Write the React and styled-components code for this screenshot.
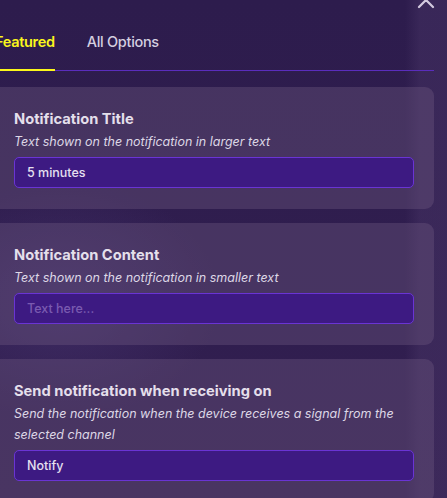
import React from "react";
import styled, { createGlobalStyle } from "styled-components";

const Global = createGlobalStyle`
  html, body { margin: 0; padding: 0; }
  body {
    width: 447px;
    height: 498px;
    overflow: hidden;
    font-family: Inter, "Noto Sans", sans-serif;
    background:
      linear-gradient(90deg, rgba(0,0,0,0) 0px, rgba(0,0,0,0) 405px, rgba(80,60,110,0.35) 420px, rgba(80,60,110,0.35) 447px),
      radial-gradient(ellipse 160px 120px at 60px 300px, rgba(90,70,140,0.35), rgba(0,0,0,0)),
      linear-gradient(180deg, #2d1c4d 0%, #321f50 100%);
  }
`;

const Window = styled.div`
  position: relative;
  width: 447px;
  height: 498px;
  overflow: hidden;
`;

const CloseButton = styled.button`
  position: absolute;
  top: -9px;
  right: 12px;
  width: 18px;
  height: 18px;
  padding: 0;
  border: 0;
  background: none;
  color: #d3cadf;
  display: flex;
  align-items: center;
  justify-content: center;
`;

const Panel = styled.div`
  margin-left: -16px;
  width: 450px;
  display: flex;
  flex-direction: column;
`;

const TabBar = styled.div`
  display: flex;
  align-items: flex-end;
  gap: 32px;
  height: 71px;
  border-bottom: 1px solid #5a2dbd;
  padding-left: 11px;
  box-sizing: border-box;
`;

const Tab = styled.div`
  font-size: 14.5px;
  font-weight: ${(p) => (p.$active ? 600 : 500)};
  color: ${(p) => (p.$active ? "#fbf71b" : "#d5cfe0")};
  padding-bottom: 17px;
  border-bottom: 2px solid ${(p) => (p.$active ? "#fbf71b" : "transparent")};
  margin-bottom: -1px;
  line-height: 20px;
  letter-spacing: -0.3px;
`;

const Cards = styled.div`
  display: flex;
  flex-direction: column;
  gap: 14px;
  padding-top: 16px;
`;

const Card = styled.div`
  background: rgba(110, 90, 130, 0.38);
  border-radius: 9px;
  padding: 21px 20px 21px 30px;
  display: flex;
  flex-direction: column;
`;

const Title = styled.div`
  font-size: 14.7px;
  font-weight: 700;
  color: #e4dfeb;
  line-height: 22px;
`;

const Desc = styled.div`
  font-size: 12.5px;
  font-style: italic;
  color: #ddd7e6;
  line-height: 21px;
  margin-top: 1px;
`;

const Input = styled.div`
  margin-top: 5px;
  height: 31px;
  box-sizing: border-box;
  background: #3d1a82;
  border: 1px solid #6a34d4;
  border-radius: 5px;
  padding: 0 12px;
  display: flex;
  align-items: center;
  font-size: 12.5px;
  font-weight: 500;
  color: ${(p) => (p.$placeholder ? "#7a5ab0" : "#e6e0f0")};
`;

const fields = [
  {
    title: "Notification Title",
    desc: "Text shown on the notification in larger text",
    value: "5 minutes",
  },
  {
    title: "Notification Content",
    desc: "Text shown on the notification in smaller text",
    value: "Text here...",
    placeholder: true,
  },
  {
    title: "Send notification when receiving on",
    desc: "Send the notification when the device receives a signal from the selected channel",
    value: "Notify",
  },
];

export default function App() {
  return (
    <Window>
      <Global />
      <CloseButton aria-label="Close">
        <svg width="18" height="18" viewBox="0 0 18 18">
          <path d="M2 2 L16 16 M16 2 L2 16" stroke="currentColor" strokeWidth="2.2" strokeLinecap="round" />
        </svg>
      </CloseButton>
      <Panel>
        <TabBar>
          <Tab $active>Featured</Tab>
          <Tab>All Options</Tab>
        </TabBar>
        <Cards>
          {fields.map((f) => (
            <Card key={f.title}>
              <Title>{f.title}</Title>
              <Desc>{f.desc}</Desc>
              <Input $placeholder={f.placeholder}>{f.value}</Input>
            </Card>
          ))}
        </Cards>
      </Panel>
    </Window>
  );
}
